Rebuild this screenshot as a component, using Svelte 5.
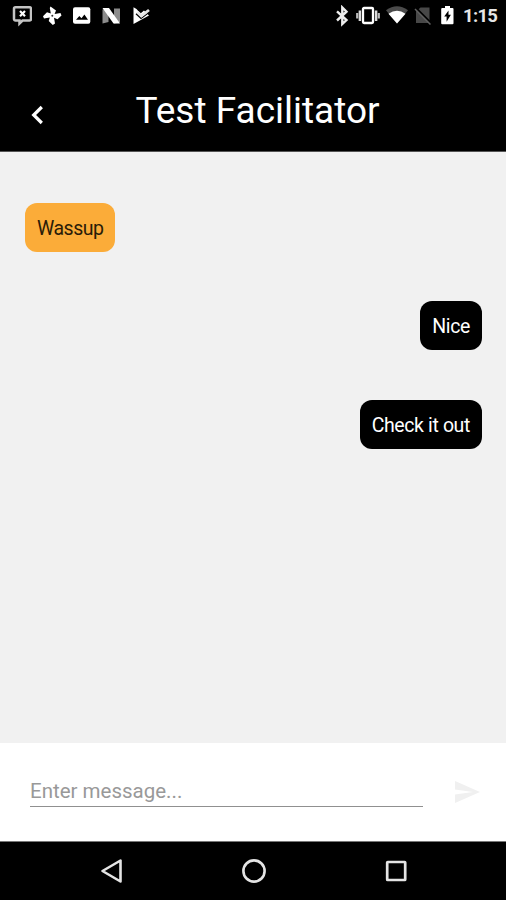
<script lang="ts">
  type Message = { text: string; mine: boolean };

  const contact = 'Test Facilitator';
  let draft: string = '';
  let messages: Message[] = [
    { text: 'Wassup', mine: false },
    { text: 'Nice', mine: true },
    { text: 'Check it out', mine: true }
  ];

  const send = () => {
    if (!draft.trim()) return;
    messages = [...messages, { text: draft.trim(), mine: true }];
    draft = '';
  };
</script>

<div class="screen">
  <div class="status">
    <div class="notifications">
      <svg width="20" height="22" viewBox="0 0 20 22">
        <path d="M3.5 2.3h14a1.5 1.5 0 0 1 1.5 1.5v10.2a1.5 1.5 0 0 1-1.5 1.5h-7l-3 3v-3h-4a1.5 1.5 0 0 1-1.5-1.5V3.8a1.5 1.5 0 0 1 1.5-1.5z" fill="none" stroke="#c4c4c4" stroke-width="2.5" />
        <path d="M8 6l5 5.2M13 6l-5 5.2" stroke="#fff" stroke-width="2.2" />
      </svg>
      <svg width="20" height="22" viewBox="0 0 20 22">
        <path d="M8.5 1.5L14 5.5L12.6 9L18.5 8L19.5 10.5L15.5 14.2L12 12.8L13 18.5L10.8 20L6.7 16L7.8 12.5L2 13.5L1 11.2L5 7.3L8.8 8.5L7.8 3z" fill="#fff" />
        <circle cx="10.3" cy="10.7" r="1" fill="#333" />
      </svg>
      <svg width="20" height="22" viewBox="0 0 20 22">
        <rect x="1" y="2.3" width="17.3" height="16.4" rx="2" fill="#fff" />
        <path d="M4 14.8l3.3-3.8 2.2 2.3 2.9-3.8 3.6 5.3z" fill="#000" />
      </svg>
      <svg width="20" height="22" viewBox="0 0 20 22">
        <path d="M.5 4.500l6-1.500v14l-6 1.500zM12 3.500h6v14l-6 1z" fill="#8c8c8c" />
        <path d="M.5 3h6.500l11 15.500h-6.500z" fill="#fff" />
      </svg>
      <svg width="20" height="22" viewBox="0 0 20 22">
        <path d="M1.500 2.300l3 1.600 4 4.600 3.500-3 5 4.900-15.500 8.600z" fill="#fff" />
        <path d="M4 8.800l5 4.700 8.500-6.500" fill="none" stroke="#000" stroke-width="1.300" />
        <path d="M5.500 7l4 3.800 7.500-5.800" fill="none" stroke="#e6e6e6" stroke-width="2.800" />
      </svg>
    </div>
    <div class="system">
      <svg width="14" height="22" viewBox="0 0 14 22">
        <path d="M1 6.300l9.500 8.700-4.200 4V2.500l4.200 4.200-9.500 8.800" fill="none" stroke="#eee" stroke-width="2.400" />
      </svg>
      <svg width="24" height="22" viewBox="0 0 24 22">
        <rect x="7" y="3" width="10" height="15" rx="1" fill="none" stroke="#fff" stroke-width="2.300" />
        <path d="M3.900 5.500v10.500M20.100 5.500v10.500" stroke="#ddd" stroke-width="2.500" />
        <path d="M1.200 8v5.500M22.800 8v5.500" stroke="#bbb" stroke-width="2.200" />
      </svg>
      <svg width="22" height="22" viewBox="0 0 22 22">
        <path d="M0 5.300Q11-3 22 5.300L11 18.500z" fill="#4b4b4b" />
        <path d="M2.500 8.700Q11 3 19.500 8.700L11 18.500z" fill="#fff" />
      </svg>
      <svg width="18" height="22" viewBox="0 0 18 22">
        <path d="M6.500 2.500H15.500V18H2V6.500z" fill="#484848" />
        <path d="M2 3l15 15" stroke="#000" stroke-width="2" />
        <path d="M1 4l15.500 15.500" stroke="#606060" stroke-width="1.500" />
      </svg>
      <svg width="19" height="22" viewBox="0 0 19 22">
        <path d="M7 1h5v2h2.500a1 1 0 0 1 1 1v14.200a1 1 0 0 1-1 1h-10.300a1 1 0 0 1-1-1V4a1 1 0 0 1 1-1H7z" fill="#fff" />
        <path d="M10.500 5.500v4.300h2.400l-4.300 7v-5.200H6.200z" fill="#000" />
      </svg>
      <span class="time">1:15</span>
    </div>
  </div>

  <header>
    <button class="back" type="button" aria-label="Back">
      <svg width="14" height="20" viewBox="0 0 14 20">
        <path d="M11.800 2L3.700 10l8.100 8" fill="none" stroke="#fff" stroke-width="3.200" />
      </svg>
    </button>
    <h1>{contact}</h1>
  </header>

  <main>
    {#each messages as message}
      <div class="bubble" class:mine={message.mine}>{message.text}</div>
    {/each}
  </main>

  <form on:submit|preventDefault={send}>
    <input type="text" placeholder="Enter message..." bind:value={draft} />
    <button class="send" type="submit" aria-label="Send">
      <svg width="26" height="24" viewBox="0 0 26 24">
        <path d="M0 1L25 12 0 23v-8.500L18 12 0 9.500z" fill="#f0f0f0" />
      </svg>
    </button>
  </form>

  <nav>
    <svg width="24" height="26" viewBox="0 0 24 26">
      <path d="M20.500 2.500v21L2.500 13z" fill="none" stroke="#e4e4e4" stroke-width="2.600" stroke-linejoin="round" />
    </svg>
    <svg width="26" height="26" viewBox="0 0 26 26">
      <circle cx="13" cy="13" r="10.600" fill="none" stroke="#e4e4e4" stroke-width="2.600" />
    </svg>
    <svg width="24" height="26" viewBox="0 0 24 26">
      <rect x="3.200" y="4" width="18" height="18" rx=".5" fill="none" stroke="#e4e4e4" stroke-width="2.700" />
    </svg>
  </nav>
</div>

<style>
  * {
    box-sizing: border-box;
  }

  .screen {
    display: flex;
    flex-direction: column;
    width: 506px;
    height: 900px;
    background-color: #000;
    font-family: Roboto, sans-serif;
    overflow: hidden;
  }

  svg {
    display: block;
    flex: none;
  }

  button {
    padding: 0;
    border: none;
    background: none;
    cursor: pointer;
  }

  .status {
    display: flex;
    justify-content: space-between;
    height: 32px;
    padding: 5px 0 0 12px;
  }

  .notifications {
    display: flex;
    gap: 10px;
  }

  .system {
    display: flex;
    gap: 6px;
  }

  .time {
    width: 43px;
    color: #e6e6e6;
    font-size: 18.5px;
    font-weight: 700;
    letter-spacing: -0.7px;
    line-height: 23px;
    white-space: nowrap;
  }

  header {
    display: grid;
    grid-template-columns: 74px 1fr 65px;
    align-items: center;
    height: 120px;
    padding-top: 38px;
    border-bottom: 1px solid #555;
  }

  .back {
    justify-self: center;
    margin-top: 8px;
  }

  h1 {
    margin: 0;
    color: #fff;
    font-size: 37px;
    font-weight: 400;
    line-height: 42px;
    text-align: center;
    white-space: nowrap;
  }

  main {
    flex: 1;
    display: flex;
    flex-direction: column;
    align-items: flex-start;
    gap: 50px;
    padding: 50.5px 24px 0 25px;
    background-color: #f1f1f1;
  }

  .bubble {
    height: 49px;
    padding: 0 12px;
    border-radius: 12px;
    background-color: #fbac39;
    color: #2a1c08;
    font-size: 19.5px;
    letter-spacing: -0.5px;
    line-height: 51px;
  }

  .bubble.mine {
    align-self: flex-end;
    margin-top: -0.3px;
    background-color: #000;
    color: #fff;
    letter-spacing: -0.38px;
    line-height: 52px;
  }

  form {
    display: flex;
    align-items: flex-start;
    height: 99px;
    padding: 29px 25px 0 30px;
    border-bottom: 1px solid #777;
    background-color: #fff;
  }

  input {
    width: 393px;
    height: 35px;
    padding: 3px 0 0;
    border: none;
    border-bottom: 1.5px solid #909090;
    border-radius: 0;
    outline: none;
    background: transparent;
    color: #222;
    font-family: inherit;
    font-size: 20.5px;
  }

  input::placeholder {
    color: #999;
    opacity: 1;
  }

  .send {
    margin: 8px 0 0 auto;
  }

  nav {
    display: flex;
    justify-content: center;
    align-items: center;
    gap: 117px;
    height: 58px;
    padding-left: 2px;
  }
</style>
